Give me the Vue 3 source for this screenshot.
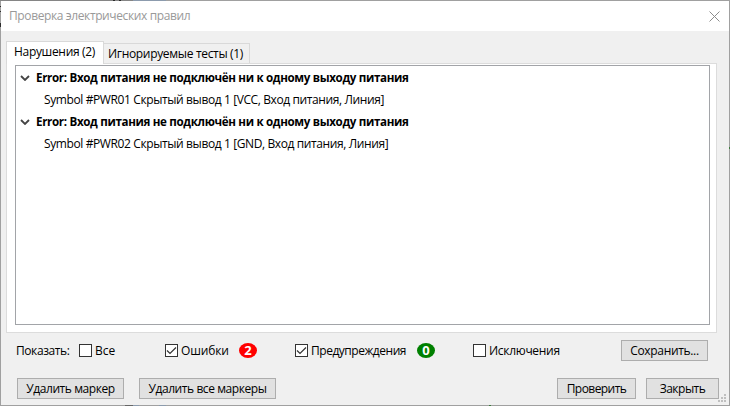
<script setup>
import { ref } from 'vue'

const groups = [
  { title: 'Error: Вход питания не подключён ни к одному выходу питания', item: 'Symbol #PWR01 Скрытый вывод 1 [VCC, Вход питания, Линия]' },
  { title: 'Error: Вход питания не подключён ни к одному выходу питания', item: 'Symbol #PWR02 Скрытый вывод 1 [GND, Вход питания, Линия]' },
]
const filters = ref([
  { id: 'all', label: 'Все', on: false },
  { id: 'errors', label: 'Ошибки', on: true, count: 2 },
  { id: 'warnings', label: 'Предупреждения', on: true, count: 0 },
  { id: 'exclusions', label: 'Исключения', on: false },
])
</script>

<template>
  <div class="window">
    <header class="titlebar">
      <span class="caption">Проверка электрических правил</span>
      <svg class="close" width="11" height="11" viewBox="0 0 11 11"><path d="M.5.5l10 10M10.5.5l-10 10" /></svg>
    </header>
    <main class="body">
      <nav class="tabs">
        <div class="tab active"><span>Нарушения (2)</span></div>
        <div class="tab"><span>Игнорируемые тесты (1)</span></div>
      </nav>
      <section class="panel">
        <div class="list">
          <template v-for="(g, i) in groups" :key="i">
            <div class="row head">
              <svg class="chev" width="10" height="6" viewBox="0 0 10 6"><path d="M1 1l4 4 4-4" /></svg>
              <span>{{ g.title }}</span>
            </div>
            <div class="row item"><span>{{ g.item }}</span></div>
          </template>
        </div>
      </section>
      <div class="filters">
        <span class="show">Показать:</span>
        <div v-for="f in filters" :key="f.id" class="filter" :class="f.id" @click="f.on = !f.on">
          <span class="box"><svg v-if="f.on" width="11" height="11" viewBox="0 0 11 11"><path d="M1 5.5l3 3 6-6" /></svg></span>
          <span class="label">{{ f.label }}</span>
          <span v-if="f.count !== undefined" class="badge">{{ f.count }}</span>
        </div>
        <button class="btn save"><span>Сохранить...</span></button>
      </div>
      <footer class="actions">
        <button class="btn del"><span>Удалить маркер</span></button>
        <button class="btn delall"><span>Удалить все маркеры</span></button>
        <button class="btn run"><span>Проверить</span></button>
        <button class="btn shut"><span>Закрыть</span></button>
      </footer>
    </main>
    <svg class="grip" width="8" height="8" viewBox="0 0 8 8" shape-rendering="crispEdges">
      <path d="M6 0h2v2h-2zM3 3h2v2h-2zM6 3h2v2h-2zM0 6h2v2h-2zM3 6h2v2h-2zM6 6h2v2h-2z" />
    </svg>
    <!-- slivers of the editor behind the dialog, visible along its edge -->
    <svg class="edge" width="730" height="406" viewBox="0 0 730 406" shape-rendering="crispEdges">
      <path fill="#858585" d="M0 0h133v1h-133z" />
      <path fill="#8c9bad" d="M133 0h33v1h-33zM133 405h6v1h-6zM159 405h7v1h-7z" />
      <path fill="#2b2b2b" d="M113 0h2v1h-2zM119 0h2v1h-2zM0 6h1v1h-1zM0 11h1v1h-1zM0 23h1v4h-1z" />
      <path fill="#666" d="M125 405h8v1h-8z" />
      <path fill="#3c7a3c" d="M729 147h1v2h-1zM489 405h2v1h-2z" />
    </svg>
  </div>
</template>

<style>
body { margin: 0; overflow: hidden; }
</style>

<style scoped>
* { box-sizing: border-box; }
.window {
  position: relative; width: 730px; height: 406px; border: 1px solid #a0a0a0; background: #f0f0f0;
  font: 12px/16px "Open Sans", "Noto Sans", sans-serif; color: #000; white-space: nowrap;
}
.titlebar { height: 30px; background: #fff; display: flex; justify-content: space-between; align-items: center; padding: 0 9px 0 8px; }
.caption { color: #999; letter-spacing: -.39px; }
.close { fill: none; stroke: #8c8c8c; stroke-width: 1; }
.body { padding: 10px 12px 0 5px; }
.tabs { display: flex; align-items: flex-end; height: 22px; letter-spacing: -.32px; }
.tab { height: 20px; border: 1px solid #d9d9d9; border-left: 0; border-bottom: 0; padding: 2px 0 0 4px; width: 146px; }
.tab.active { height: 23px; margin-bottom: -1px; width: 98px; border-left: 1px solid #d9d9d9; background: #fff; padding: 2px 0 0 7px; position: relative; }
.panel { height: 270px; border: 1px solid #dcdcdc; background: #fff; padding: 1px 7px 7px 8px; width: 711px; }
.list { height: 260px; width: 695px; border: 1px solid #a2a4a8; padding-top: 1px; }
.row { height: 22px; display: flex; align-items: center; }
.head { font-weight: 700; padding-left: 4px; gap: 6px; letter-spacing: -.35px; }
.head span { transform: scaleX(.967); transform-origin: left; }
.chev { fill: none; stroke: #444; stroke-width: 1.8; }
.item { padding-left: 28px; letter-spacing: -.39px; }
.filters { display: flex; align-items: center; height: 21px; margin-top: 7px; padding-left: 10px; position: relative; }
.show { width: 63px; letter-spacing: -.42px; }
.filter { display: flex; align-items: center; }
.all { width: 86px; }
.errors { width: 130px; letter-spacing: -.15px; }
.warnings { width: 178px; letter-spacing: -.47px; }
.exclusions { width: 148px; letter-spacing: -.3px; }
.label { padding-top: 1px; }
.box { width: 13px; height: 13px; border: 1px solid #333; background: #fff; margin-right: 3px; display: block; }
.box svg { display: block; fill: none; stroke: #333; stroke-width: 1.2; }
.badge { width: 18px; height: 15px; margin-top: -1px; border-radius: 50%; background: #f00; color: #fff; font: 700 13px/15px "Open Sans", sans-serif; letter-spacing: 0; text-align: center; margin-left: auto; }
.errors .badge { margin-right: 38px; }
.warnings .badge { background: #008000; margin-right: 38px; }
.btn { height: 21px; border: 1px solid #adadad; background: #e1e1e1; font: inherit; line-height: 16px; padding: 0; display: flex; align-items: center; justify-content: center; letter-spacing: -.42px; }
.save { width: 87px; letter-spacing: -.33px; }
.actions { display: flex; margin-top: 17px; padding-left: 11px; }
.del { width: 107px; margin-right: 15px; }
.delall { width: 137px; }
.run { width: 79px; margin-left: auto; margin-right: 10px; letter-spacing: -.55px; }
.shut { width: 73px; margin-right: -2px; letter-spacing: -.5px; }
.grip { position: absolute; right: 3px; bottom: 3px; fill: #bfbfbf; }
.edge { position: absolute; left: -1px; top: -1px; pointer-events: none; }
</style>
